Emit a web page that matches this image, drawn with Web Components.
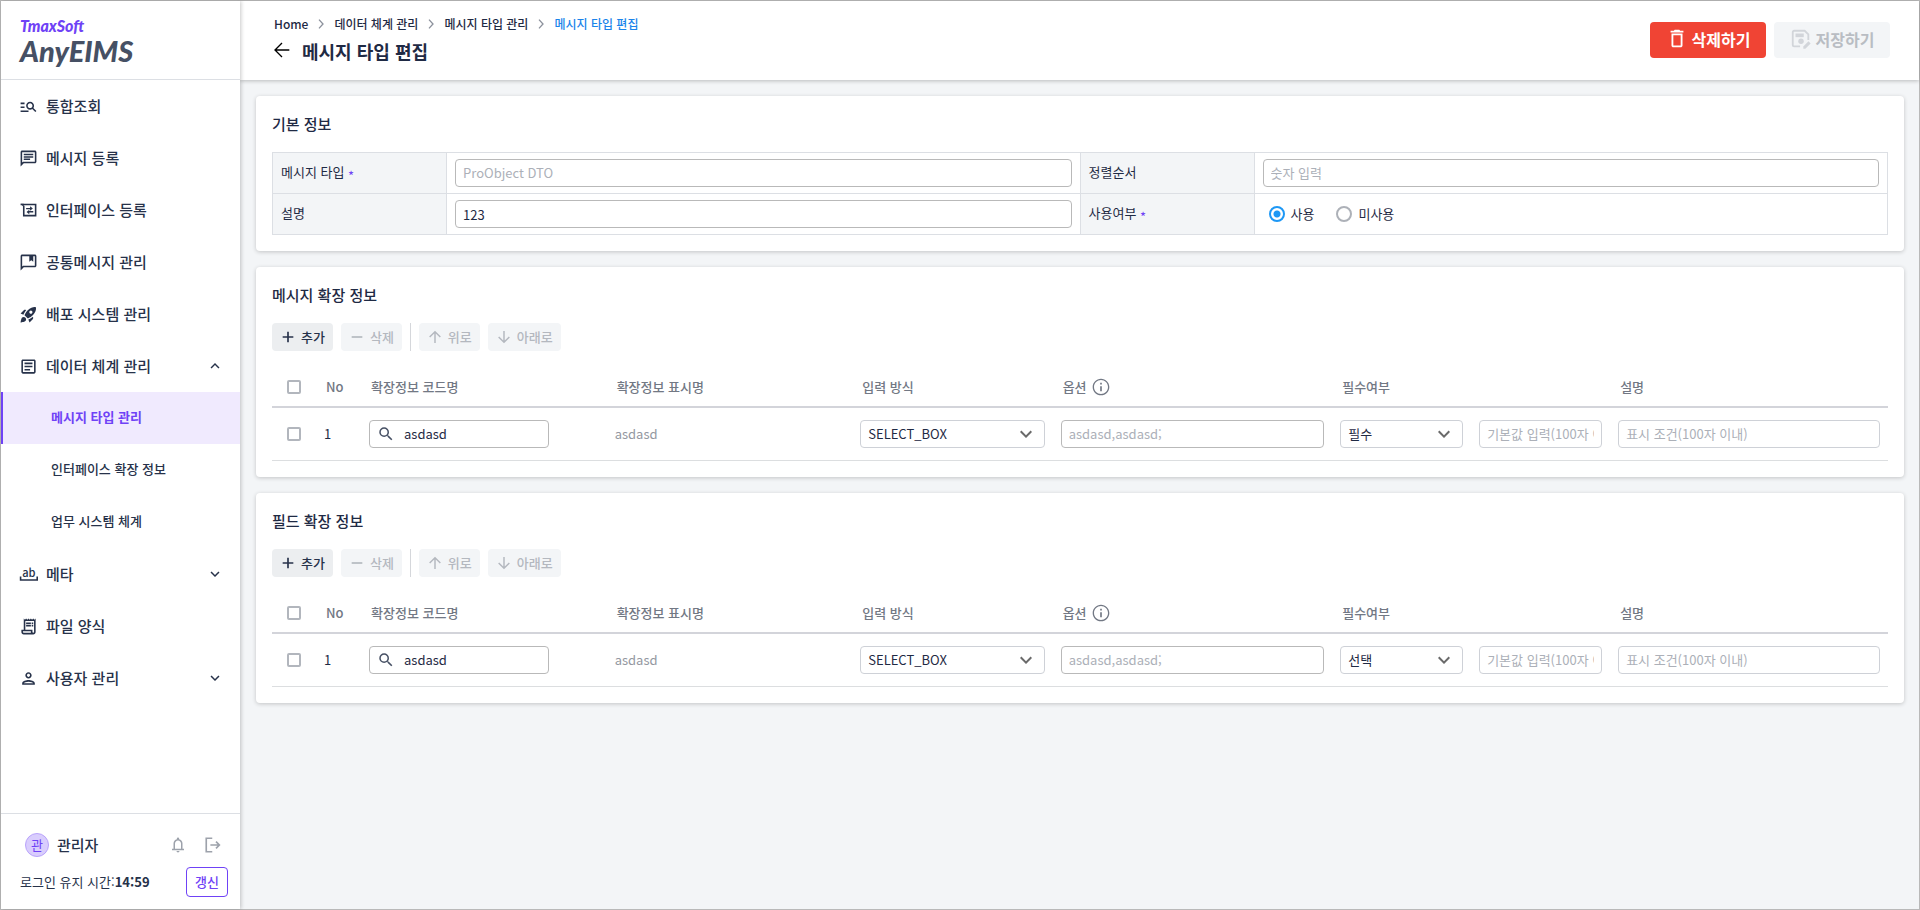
<!DOCTYPE html>
<html lang="ko">
<head>
<meta charset="utf-8">
<title>AnyEIMS - 메시지 타입 편집</title>
<style>
  html, body { margin: 0; }
  body {
    font-family: "Noto Sans CJK KR", "Noto Sans", sans-serif;
    font-size: 13px;
    line-height: 20px;
    color: #1f2a44;
    --purple: #6f42f6;
    --line: #dcdfe4;
  }
</style>
</head>
<body>
<app-shell>
  <side-nav slot="side">
    <nav-item icon="search-list">통합조회</nav-item>
    <nav-item icon="chat">메시지 등록</nav-item>
    <nav-item icon="interface">인터페이스 등록</nav-item>
    <nav-item icon="chat-mark">공통메시지 관리</nav-item>
    <nav-item icon="rocket">배포 시스템 관리</nav-item>
    <nav-item icon="article" toggle="up">데이터 체계 관리</nav-item>
    <nav-item sub active>메시지 타입 관리</nav-item>
    <nav-item sub>인터페이스 확장 정보</nav-item>
    <nav-item sub>업무 시스템 체계</nav-item>
    <nav-item icon="meta" toggle="down">메타</nav-item>
    <nav-item icon="receipt">파일 양식</nav-item>
    <nav-item icon="person" toggle="down">사용자 관리</nav-item>
  </side-nav>
  <page-header slot="header" heading="메시지 타입 편집">
    <action-button slot="actions" kind="danger" icon="trash">삭제하기</action-button>
    <action-button slot="actions" kind="primary" icon="save" disabled>저장하기</action-button>
  </page-header>
  <info-card heading="기본 정보"><basic-form></basic-form></info-card>
  <info-card heading="메시지 확장 정보"><row-tools></row-tools><ext-table required="필수"></ext-table></info-card>
  <info-card heading="필드 확장 정보"><row-tools></row-tools><ext-table required="선택"></ext-table></info-card>
</app-shell>

<script>
const define = (name, render) => customElements.define(name, class extends HTMLElement {
  connectedCallback() {
    if (this.shadowRoot) return;
    this.attachShadow({ mode: 'open' }).innerHTML = render(this);
  }
});

const ICONS = {
  'search-list': '<path d="M7 9H2V7h5v2zm0 3H2v2h5v-2zm13.59 7l-3.83-3.83c-.8.52-1.74.83-2.76.83-2.76 0-5-2.24-5-5s2.24-5 5-5 5 2.24 5 5c0 1.02-.31 1.96-.83 2.75L22 17.59 20.59 19zM17 11c0-1.65-1.35-3-3-3s-3 1.35-3 3 1.35 3 3 3 3-1.35 3-3zM2 19h10v-2H2v2z"/>',
  chat: '<path d="M4 4h16v12H5.17L4 17.17V4m0-2c-1.1 0-1.99.9-1.99 2L2 22l4-4h14c1.1 0 2-.9 2-2V4c0-1.1-.9-2-2-2H4zm2 10h8v2H6v-2zm0-3h12v2H6V9zm0-3h12v2H6V6z"/>',
  'chat-mark': '<path d="M4 4h16v12H5.17L4 17.17V4m0-2c-1.1 0-1.99.9-1.99 2L2 22l4-4h14c1.1 0 2-.9 2-2V4c0-1.1-.9-2-2-2H4z"/><path d="M13 3h5v8l-2.500-1.800L13 11z"/>',
  interface: '<path d="M2 4.500h19v14H6V6" fill="none" stroke="currentColor" stroke-width="2"/><path d="M2 3.500h4v4z"/><path d="M9 8.700h5V6.500l3.500 3-3.500 2.800v-1.800H9zM18 12.700h-5V11L9.500 14l3.500 2.800v-2.300H18z"/>',
  rocket: '<path d="M9.190 6.350c-2.040 2.290-3.440 5.580-3.570 5.890L2 10.690l4.050-4.050c.47-.47 1.150-.68 1.810-.55l1.330.26zM11.170 17s3.740-1.550 5.890-3.700c5.400-5.400 4.500-9.620 4.210-10.570-.95-.3-5.170-1.190-10.570 4.210C8.550 9.090 7 12.830 7 12.830L11.170 17zm6.480-2.190c-2.290 2.040-5.580 3.440-5.890 3.570L13.310 22l4.050-4.050c.47-.47.68-1.150.55-1.810l-.26-1.330zM9 18c0 .83-.34 1.580-.88 2.120C6.940 21.300 2 22 2 22s.7-4.940 1.880-6.120C4.420 15.340 5.170 15 6 15c1.660 0 3 1.340 3 3zm4-9c0-1.100.9-2 2-2s2 .9 2 2-.9 2-2 2-2-.9-2-2z"/>',
  article: '<path d="M19 5v14H5V5h14m0-2H5c-1.100 0-2 .9-2 2v14c0 1.100.9 2 2 2h14c1.100 0 2-.9 2-2V5c0-1.100-.9-2-2-2z"/><path d="M14 17H7v-2h7v2zm3-4H7v-2h10v2zm0-4H7V7h10v2z"/>',
  meta: '<path d="M2 14.500V19h21v-4.500" fill="none" stroke="currentColor" stroke-width="2"/><text x="12.500" y="15" text-anchor="middle" font-size="14" font-weight="500">ab</text>',
  receipt: '<path d="M19.500 3.500L18 2l-1.500 1.500L15 2l-1.500 1.500L12 2l-1.500 1.500L9 2 7.500 3.500 6 2v14H3v3c0 1.660 1.340 3 3 3h12c1.660 0 3-1.340 3-3V2l-1.500 1.500zM15 20H6c-.55 0-1-.45-1-1v-1h10v2zm4-1c0 .55-.45 1-1 1s-1-.45-1-1v-3H8V5h11v14z"/><path d="M9 7h6v2H9zM16 7h2v2h-2zM9 10h6v2H9zM16 10h2v2h-2z"/>',
  person: '<path d="M12 6c1.100 0 2 .9 2 2s-.9 2-2 2-2-.9-2-2 .9-2 2-2m0 10c2.700 0 5.800 1.290 6 2H6c.23-.72 3.310-2 6-2m0-12C9.790 4 8 5.790 8 8s1.790 4 4 4 4-1.790 4-4-1.790-4-4-4zm0 10c-2.670 0-8 1.340-8 4v2h16v-2c0-2.660-5.330-4-8-4z"/>',
  up: '<path d="M12 8l-6 6 1.410 1.410L12 10.830l4.590 4.580L18 14z"/>',
  down: '<path d="M16.590 8.590L12 13.170 7.410 8.590 6 10l6 6 6-6z"/>',
  right: '<path d="M9 5.500l6 6.500-6 6.500" fill="none" stroke="currentColor" stroke-width="2"/>',
  bell: '<path d="M4 19v-2h2v-7q0-2.075 1.250-3.687T10.500 4.200v-.7q0-.625.438-1.062T12 2t1.063.438T13.500 3.500v.7q2 .5 3.250 2.113T18 10v7h2v2zm8 3q-.825 0-1.412-.587T10 20h4q0 .825-.587 1.413T12 22m-4-5h8v-7q0-1.650-1.175-2.825T12 6 9.175 7.175 8 10z"/>',
  logout: '<path d="M11 3H3v18h8M8.500 12H20M16 7.500l4.500 4.500-4.500 4.500" fill="none" stroke="currentColor" stroke-width="2.200"/>',
  back: '<path d="M23 12H2M12 1.500L1.500 12 12 22.500" fill="none" stroke="currentColor" stroke-width="2"/>',
  trash: '<path d="M6 19c0 1.100.9 2 2 2h8c1.100 0 2-.9 2-2V6H6v13zM8 8h8v11H8V8zm7.500-5l-1-1h-5l-1 1H5v2h14V3h-3.500z"/>',
  save: '<path d="M11 20H4.500A1.500 1.500 0 0 1 3 18.500v-14A1.500 1.500 0 0 1 4.500 3H16l4 4v6" fill="none" stroke="currentColor" stroke-width="2"/><path d="M6 6h9v4H6z"/><circle cx="12" cy="14.500" r="3"/><path d="M14.500 22.500v-2.300l5.700-5.700 2.300 2.300-5.700 5.700z"/>',
  plus: '<path d="M12 4v16M4 12h16" fill="none" stroke="currentColor" stroke-width="2.500"/>',
  minus: '<path d="M4 12h16" fill="none" stroke="currentColor" stroke-width="2.500"/>',
  'arrow-up': '<path d="M12 21V4M4 12l8-8 8 8" fill="none" stroke="currentColor" stroke-width="2.200"/>',
  'arrow-down': '<path d="M12 3v17M4 12l8 8 8-8" fill="none" stroke="currentColor" stroke-width="2.200"/>',
  magnify: '<path d="M15.500 14h-.79l-.28-.27A6.471 6.471 0 0 0 16 9.500 6.500 6.500 0 1 0 9.500 16c1.610 0 3.090-.59 4.230-1.570l.27.28v.79l5 4.990L20.490 19l-4.990-5zm-6 0C7.010 14 5 11.990 5 9.500S7.010 5 9.500 5 14 7.010 14 9.500 11.990 14 9.500 14z"/>',
  info: '<path d="M11 7h2v2h-2zm0 4h2v6h-2zm1-9C6.480 2 2 6.480 2 12s4.480 10 10 10 10-4.480 10-10S17.520 2 12 2zm0 18.400c-4.600 0-8.400-3.800-8.400-8.400S7.400 3.600 12 3.600s8.400 3.800 8.400 8.400-3.800 8.400-8.400 8.400z"/>'
};

define('ui-icon', el => `
  <style>
    :host { display: block; flex: none; width: var(--size, 20px); height: var(--size, 20px); }
    svg { display: block; width: 100%; height: 100%; fill: currentColor; overflow: visible; }
  </style>
  <svg viewBox="0 0 24 24" aria-hidden="true">${ICONS[el.getAttribute('name')]}</svg>`);

define('app-shell', () => `
  <style>
    :host {
      display: grid; grid-template-columns: 239px 1fr; box-sizing: border-box;
      min-height: 100vh; border: 1px solid #b9b9b9; background: #f3f5f7;
    }
    .side { display: grid; position: relative; z-index: 2; background: #fff; box-shadow: 1px 0 4px rgba(0,0,0,.22); }
    .main { min-width: 0; }
    main { display: flex; flex-direction: column; gap: 16px; padding: 16px 15px 16px 16px; }
  </style>
  <div class="side"><slot name="side"></slot></div>
  <div class="main"><slot name="header"></slot><main><slot></slot></main></div>`);

define('side-nav', () => `
  <style>
    :host { display: flex; flex-direction: column; color: #27324a; }
    .logo {
      box-sizing: border-box; height: 79px; padding: 16px 19px 0; border-bottom: 1px solid var(--line);
      font-family: Lato, sans-serif; font-style: italic; font-weight: 900;
    }
    .brand { font-size: 16px; line-height: 18px; color: var(--purple); }
    .product { font-size: 29px; line-height: 32px; color: #465064; }
    nav { flex: 1; }
    footer { display: grid; gap: 10px; height: 96px; box-sizing: border-box; padding: 19px 12px 12px 19px; border-top: 1px solid var(--line); }
    .row { display: flex; align-items: center; }
    .user { padding: 0 6px 0 5px; gap: 8px; height: 24px; --size: 18px; }
    .avatar {
      box-sizing: border-box; width: 24px; height: 24px; border: 1px solid #b9a3fb; border-radius: 50%;
      background: #d9cdfd; color: var(--purple); text-align: center; line-height: 22px;
    }
    .name { flex: 1; font-size: 15px; font-weight: 500; }
    .icon { padding: 0; border: 0; background: none; color: #9da2ab; }
    .icon + .icon { margin-left: 9px; }
    .timer { justify-content: space-between; }
    .timer span { font-variant-ligatures: no-contextual; }
    .renew {
      width: 42px; height: 30px; padding: 0; border: 1px solid var(--purple); border-radius: 4px;
      background: #fff; color: var(--purple); font-family: inherit; font-size: 13px; line-height: 20px; font-weight: 500;
    }
  </style>
  <div class="logo"><div class="brand">TmaxSoft</div><div class="product">AnyEIMS</div></div>
  <nav><slot></slot></nav>
  <footer>
    <div class="row user">
      <span class="avatar">관</span><span class="name">관리자</span>
      <button class="icon" aria-label="알림"><ui-icon name="bell"></ui-icon></button>
      <button class="icon" aria-label="로그아웃"><ui-icon name="logout"></ui-icon></button>
    </div>
    <div class="row timer"><span>로그인 유지 시간:<b>14:59</b></span><button class="renew">갱신</button></div>
  </footer>`);

define('nav-item', el => {
  const toggle = el.getAttribute('toggle');
  const icon = el.getAttribute('icon');
  return `
  <style>
    :host { display: block; }
    a {
      display: flex; align-items: center; gap: 8px; box-sizing: border-box; height: 52px; padding: 0 16px 0 18px;
      color: #27324a; font-size: 15px; font-weight: 500; text-decoration: none; --size: 19px;
    }
    .label { flex: 1; }
    :host([sub]) a { padding-left: 50px; padding-bottom: 2px; font-size: 13px; }
    :host([active]) a { padding-left: 48px; border-left: 2px solid var(--purple); background: #f0eafe; color: var(--purple); font-weight: 700; }
    .toggle { --size: 18px; }
  </style>
  <a href="#">${icon ? `<ui-icon name="${icon}"></ui-icon>` : ''}<span class="label"><slot></slot></span>${toggle ? `<ui-icon class="toggle" name="${toggle}"></ui-icon>` : ''}</a>`;
});

define('page-header', el => `
  <style>
    :host {
      display: flex; justify-content: space-between; align-items: flex-start; position: relative; z-index: 1;
      box-sizing: border-box; height: 79px; padding: 13px 29px 0 34px; background: #fff; box-shadow: 0 1px 4px rgba(0,0,0,.24);
    }
    ol { display: flex; align-items: center; margin: 0; padding: 0; list-style: none; font-size: 12px; line-height: 20px; font-weight: 500; --size: 16px; }
    li { display: flex; align-items: center; }
    li ui-icon { margin: 0 5px; color: #8c919c; }
    a { color: inherit; text-decoration: none; }
    [aria-current] { color: #1b84ea; }
    .title { display: flex; align-items: flex-start; gap: 12px; padding-top: 4px; --size: 16px; }
    .title button { padding: 4px 0 0; border: 0; background: none; color: #000; }
    h1 { margin: 0; font-size: 18px; line-height: 26px; font-weight: 700; }
    .actions { display: flex; gap: 8px; padding-top: 8px; }
  </style>
  <div>
    <nav aria-label="경로"><ol>
      <li><a href="#">Home</a><ui-icon name="right"></ui-icon></li>
      <li><a href="#">데이터 체계 관리</a><ui-icon name="right"></ui-icon></li>
      <li><a href="#">메시지 타입 관리</a><ui-icon name="right"></ui-icon></li>
      <li><a href="#" aria-current="page">메시지 타입 편집</a></li>
    </ol></nav>
    <div class="title"><button aria-label="뒤로"><ui-icon name="back"></ui-icon></button><h1>${el.getAttribute('heading')}</h1></div>
  </div>
  <div class="actions"><slot name="actions"></slot></div>`);

define('action-button', el => `
  <style>
    :host { display: block; --size: 22px; }
    button {
      display: flex; align-items: center; justify-content: center; gap: 4px; box-sizing: border-box;
      width: 116px; height: 36px; padding: 0 0 2px; border: 0; border-radius: 4px;
      font-family: inherit; font-size: 16px; line-height: 24px; font-weight: 700;
    }
    :host([kind=danger]) button { background: #f04434; color: #fff; }
    button:disabled { background: #f3f5f7; color: #b9bdc3; }
    button:disabled ui-icon { color: #d2d5da; }
  </style>
  <button ${el.hasAttribute('disabled') ? 'disabled' : ''}><ui-icon name="${el.getAttribute('icon')}"></ui-icon><span><slot></slot></span></button>`);

define('info-card', el => `
  <style>
    :host { display: block; padding: 16px; border-radius: 4px; background: #fff; box-shadow: 0 1px 4px rgba(0,0,0,.2); }
    h2 { margin: 0 0 16px; font-size: 15px; line-height: 24px; font-weight: 500; }
  </style>
  <h2>${el.getAttribute('heading')}</h2><slot></slot>`);

const FIELD_CSS = `
  input[type=text], select {
    display: block; box-sizing: border-box; width: 100%; height: 28px; margin: 0; padding: 0 7px;
    border: 1px solid #b9b9b9; border-radius: 4px; background: #fff; color: #1f2a44;
    font-family: inherit; font-size: 13px; line-height: 20px; outline: 0;
  }
  input[type=text]:placeholder-shown { padding-bottom: 2px; }
  input::placeholder { color: #acb0b8; opacity: 1; }
  label { cursor: pointer; }`;

define('basic-form', () => `
  <style>
    :host { display: block; }
    ${FIELD_CSS}
    table { width: 100%; border-collapse: collapse; table-layout: fixed; }
    .name { width: 174px; }
    th, td { box-sizing: border-box; height: 41px; padding: 0 8px; border: 1px solid #dcdfe4; text-align: left; }
    th { padding-bottom: 2px; background: #f3f5f7; font-weight: 400; }
    i { color: var(--purple); font-style: normal; line-height: 0; vertical-align: sub; }
    .radios { display: flex; gap: 22px; padding-left: 6px; }
    .radios label { display: flex; align-items: center; gap: 6px; }
    input[type=radio] {
      appearance: none; box-sizing: border-box; width: 16px; height: 16px; margin: 0;
      border: 2px solid #adb1b8; border-radius: 50%; background: #fff;
    }
    input[type=radio]:checked { border-color: #1e98f5; background: radial-gradient(circle, #1e98f5 0 3px, #fff 4px); }
  </style>
  <table>
    <colgroup><col class="name"><col><col class="name"><col></colgroup>
    <tr>
      <th scope="row"><label for="type">메시지 타입 <i>*</i></label></th>
      <td><input type="text" id="type" placeholder="ProObject DTO"></td>
      <th scope="row"><label for="order">정렬순서</label></th>
      <td><input type="text" id="order" placeholder="숫자 입력"></td>
    </tr>
    <tr>
      <th scope="row"><label for="desc">설명</label></th>
      <td><input type="text" id="desc" value="123"></td>
      <th scope="row" id="use">사용여부 <i>*</i></th>
      <td><div class="radios" role="radiogroup" aria-labelledby="use">
        <label><input type="radio" name="use" checked>사용</label>
        <label><input type="radio" name="use">미사용</label>
      </div></td>
    </tr>
  </table>`);

define('row-tools', () => `
  <style>
    :host { display: flex; gap: 8px; margin-bottom: 16px; --size: 16px; }
    button {
      display: flex; align-items: center; gap: 5px; height: 28px; padding: 0 8px; border: 0; border-radius: 4px;
      background: #eceef0; color: #27324a; font-family: inherit; font-size: 13px; line-height: 20px; font-weight: 500;
    }
    button:disabled { background: #f3f5f7; color: #b4b8bf; }
    hr { width: 1px; margin: 0; border: 0; background: #d5d7db; }
  </style>
  <button><ui-icon name="plus"></ui-icon>추가</button>
  <button disabled><ui-icon name="minus"></ui-icon>삭제</button>
  <hr>
  <button disabled><ui-icon name="arrow-up"></ui-icon>위로</button>
  <button disabled><ui-icon name="arrow-down"></ui-icon>아래로</button>`);

define('ext-table', el => `
  <style>
    :host { display: block; }
    ${FIELD_CSS}
    table { width: 100%; border-collapse: separate; border-spacing: 0; table-layout: fixed; }
    th { box-sizing: border-box; height: 41px; padding: 0 10px; border-bottom: 2px solid #d3d4da; color: #727884; font-weight: 500; text-align: left; }
    td { box-sizing: border-box; height: 53px; padding: 0 8px; border-bottom: 1px solid #dcdee0; }
    .check { padding: 0 15px; }
    .c-check { width: 44px; } .c-no { width: 45px; }
    .c-code, .c-name { width: 15.2%; } .c-type { width: 12.4%; }
    .c-option { width: 17.3%; } .c-short { width: 8.6%; }
    input[type=checkbox] {
      display: block; appearance: none; box-sizing: border-box; width: 14px; height: 14px; margin: 0;
      border: 2px solid #b2b6bd; border-radius: 2px; background: #fff;
    }
    .search {
      display: flex; align-items: center; gap: 9px; box-sizing: border-box; width: 180px; height: 28px; padding: 0 7px;
      border: 1px solid #b9b9b9; border-radius: 4px; color: #465064; --size: 18px;
    }
    .search input[type=text] { flex: 1; min-width: 0; height: 20px; padding: 0; border: 0; }
    .muted { color: #9498a1; }
    .option { display: flex; align-items: center; gap: 4px; --size: 20px; }
    .pick { display: grid; align-items: center; color: #6a6a6a; --size: 24px; }
    .pick > * { grid-area: 1 / 1; }
    .pick ui-icon { justify-self: end; margin-right: 7px; pointer-events: none; }
    .pick select { appearance: none; }
    .pick select, input[type=text].soft { border-color: #ced1d7; }
  </style>
  <table>
    <colgroup>
      <col class="c-check"><col class="c-no"><col class="c-code"><col class="c-name"><col class="c-type">
      <col class="c-option"><col class="c-short"><col class="c-short"><col>
    </colgroup>
    <thead><tr>
      <th class="check"><input type="checkbox" aria-label="전체 선택"></th><th>No</th><th>확장정보 코드명</th><th>확장정보 표시명</th>
      <th>입력 방식</th><th><div class="option">옵션<ui-icon name="info"></ui-icon></div></th><th>필수여부</th><th></th><th>설명</th>
    </tr></thead>
    <tbody><tr>
      <td class="check"><input type="checkbox" aria-label="1행 선택"></td>
      <td>1</td>
      <td><div class="search"><ui-icon name="magnify"></ui-icon><input type="text" aria-label="확장정보 코드명" value="asdasd"></div></td>
      <td class="muted">asdasd</td>
      <td><div class="pick"><select aria-label="입력 방식"><option>SELECT_BOX</option></select><ui-icon name="down"></ui-icon></div></td>
      <td><input type="text" aria-label="옵션" placeholder="asdasd,asdasd;"></td>
      <td><div class="pick"><select aria-label="필수여부"><option>${el.getAttribute('required')}</option></select><ui-icon name="down"></ui-icon></div></td>
      <td><input class="soft" type="text" aria-label="기본값" placeholder="기본값 입력(100자 이내)"></td>
      <td><input class="soft" type="text" aria-label="설명" placeholder="표시 조건(100자 이내)"></td>
    </tr></tbody>
  </table>`);
</script>
</body>
</html>
